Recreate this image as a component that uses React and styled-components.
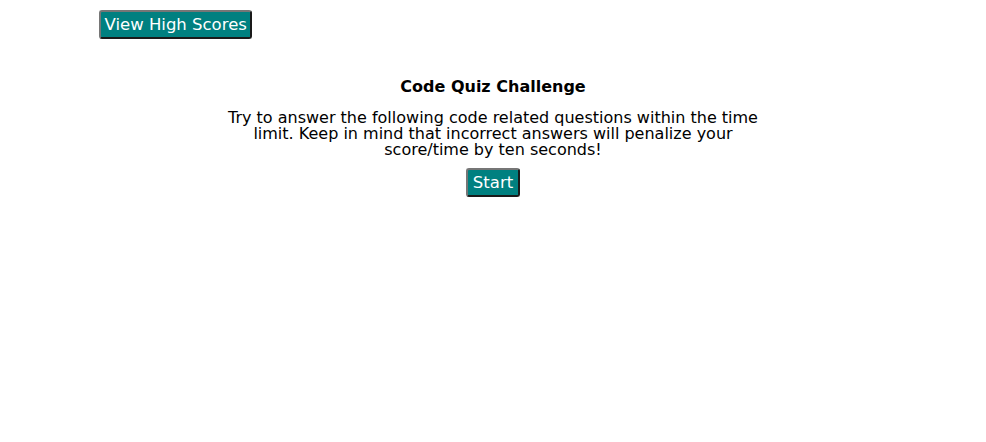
import React from "react";
import styled, { createGlobalStyle } from "styled-components";

const Global = createGlobalStyle`
  body {
    margin: 8px;
    background: #fff;
    font-family: "DejaVu Sans", Verdana, sans-serif;
    color: #000;
  }
`;

const Header = styled.header`
  display: flex;
  padding: 2px 0 0 91px;
`;

const Button = styled.button`
  background: #008080;
  color: #fff;
  font-family: "DejaVu Sans", Verdana, sans-serif;
  font-size: 16.5px;
  padding: 2px ${(p) => p.$px ?? 5}px;
  border: 2px solid;
  border-color: #767676 #1a1a1a #1a1a1a #767676;
  border-radius: 3px;
  line-height: 21px;
  cursor: pointer;
`;

const Main = styled.main`
  display: flex;
  flex-direction: column;
  align-items: center;
  margin-top: 38px;
`;

const Title = styled.h1`
  font-size: 16px;
  font-weight: bold;
  margin: 0 0 14px;
`;

const Intro = styled.p`
  width: 540px;
  margin: 0 0 10px;
  text-align: center;
  font-size: 16px;
  line-height: 16px;
`;

export default function App() {
  return (
    <>
      <Global />
      <Header>
        <Button $px={3.5}>View High Scores</Button>
      </Header>
      <Main>
        <Title>Code Quiz Challenge</Title>
        <Intro>
          Try to answer the following code related questions within the time
          limit. Keep in mind that incorrect answers will penalize your
          score/time by ten seconds!
        </Intro>
        <Button>Start</Button>
      </Main>
    </>
  );
}
